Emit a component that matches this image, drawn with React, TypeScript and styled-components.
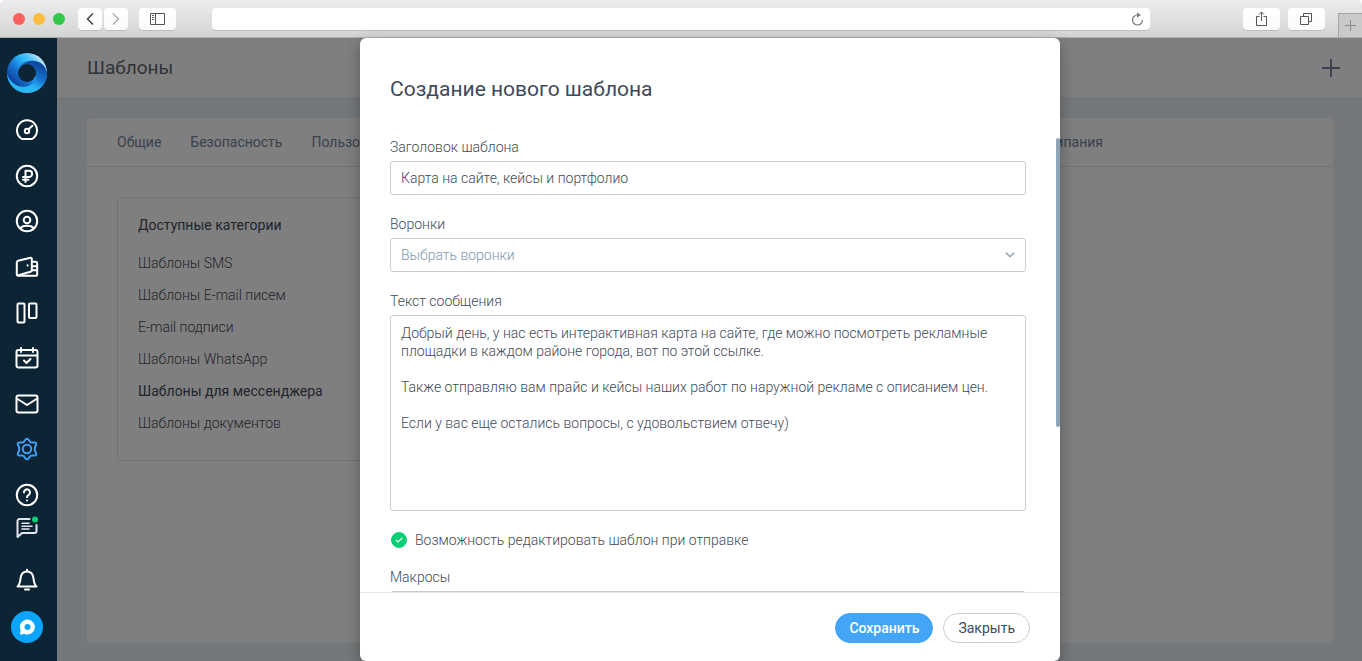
import React from "react";
import styled, { createGlobalStyle, css } from "styled-components";

const Global = createGlobalStyle`
  *, *::before, *::after { box-sizing: border-box; }
  body { margin: 0; background: #fff; }
  body, button, input, select, textarea {
    font-family: Roboto, "Noto Sans", "Liberation Sans", sans-serif;
    font-size: 14px;
    line-height: 18px;
    color: #3f4a59;
  }
  button { cursor: pointer; padding: 0; border: 0; background: none; }
  a { text-decoration: none; color: inherit; }
  h1, h2, ul { margin: 0; padding: 0; }
  ul { list-style: none; }
  svg { display: block; flex: none; }
`;

/* ---------- browser window ---------- */

const Page = styled.div`
  height: 100vh;
  display: flex;
  flex-direction: column;
`;

const Chrome = styled.div`
  flex: none;
  height: 38px;
  display: flex;
  align-items: center;
  padding-left: 13px;
  background: linear-gradient(#ececec, #d4d4d4);
  border-bottom: 1px solid #adadad;
  border-radius: 5px 5px 0 0;
`;

const Lights = styled.div`
  display: flex;
  gap: 8px;
  margin-right: 13px;
`;

const Light = styled.span<{ $color: string }>`
  width: 12px;
  height: 12px;
  border-radius: 50%;
  background: ${(p) => p.$color};
`;

const ChromeButton = styled.button<{ $wide?: boolean }>`
  flex: none;
  width: ${(p) => (p.$wide ? 37 : 24)}px;
  height: 22px;
  display: flex;
  align-items: center;
  justify-content: center;
  background: linear-gradient(#fff, #fbfbfb);
  border-radius: 4px;
  box-shadow: 0 1px 0 #bdbdbd;
`;

const ButtonPair = styled.div<{ $gap: number }>`
  display: flex;
  gap: ${(p) => p.$gap}px;
`;

const SidebarToggle = styled.div`
  margin: 0 36px 0 11px;
`;

const AddressBar = styled.div`
  flex: 1;
  height: 22px;
  margin-right: 93px;
  display: flex;
  align-items: center;
  background: #fff;
  border-radius: 4px;
  box-shadow: 0 1px 0 #bdbdbd;
`;

const AddressInput = styled.input`
  flex: 1;
  min-width: 0;
  border: 0;
  outline: 0;
  background: none;
  padding: 0 8px;
`;

const ReloadButton = styled.button`
  margin-right: 6px;
`;

const NewTab = styled.button`
  flex: none;
  align-self: flex-end;
  width: 24px;
  height: 24px;
  margin-left: 13px;
  display: flex;
  align-items: center;
  justify-content: center;
  background: #c9c9c9;
  border: 1px solid #a5a5a5;
  border-width: 1px 0 0 1px;
`;

/* ---------- application ---------- */

const Shell = styled.div`
  flex: 1;
  min-height: 0;
  display: flex;
`;

const Sidebar = styled.aside`
  flex: none;
  width: 57px;
  padding: 15px 3px 18px 0;
  display: flex;
  flex-direction: column;
  align-items: center;
  background: #0d2435;
`;

const Nav = styled.nav`
  flex: 0 0 389px;
  margin-top: 25px;
  display: flex;
  flex-direction: column;
  justify-content: space-between;
`;

const NavLink = styled.a<{ $active?: boolean }>`
  color: ${(p) => (p.$active ? "#3ea2f8" : "#fff")};
`;

const Extras = styled.div`
  flex: 1;
  margin-top: 8px;
  display: flex;
  flex-direction: column;
  align-items: center;
  color: #fff;
`;

const BellButton = styled.button`
  margin: auto 0 19px;
  color: #fff;
`;

const Work = styled.div`
  flex: 1;
  min-width: 0;
  position: relative;
  display: flex;
  flex-direction: column;
  background: #e8f0f5;
`;

const TopBar = styled.header`
  flex: none;
  height: 59px;
  display: flex;
  align-items: center;
  justify-content: space-between;
  padding: 0 22px 0 30px;
  background: #fff;
`;

const PageTitle = styled.h1`
  font-size: 19px;
  line-height: 24px;
  font-weight: 400;
  color: #5c6874;
`;

const Card = styled.section`
  flex: 1;
  min-height: 0;
  margin: 21px 29px 18px 30px;
  background: #fff;
  border-radius: 5px;
`;

const Tabs = styled.nav`
  display: flex;
  gap: 29px;
  height: 49px;
  padding: 0 230px 0 30px;
  align-items: center;
  border-bottom: 1px solid #dfe5ed;
`;

const Tab = styled.a<{ $last?: boolean }>`
  color: #74859a;
  ${(p) => p.$last && css`margin-left: auto;`}
`;

const Categories = styled.div`
  width: 300px;
  margin: 30px;
  padding: 18px 20px 28px;
  border: 1px solid #e2e8ee;
  border-radius: 4px;
`;

const CategoriesTitle = styled.h2`
  font-size: 14px;
  line-height: 18px;
  font-weight: 400;
  margin-bottom: 20px;
`;

const CategoryList = styled.ul`
  display: flex;
  flex-direction: column;
  gap: 14px;
`;

const CategoryLink = styled.a<{ $active?: boolean }>`
  font-weight: ${(p) => (p.$active ? 400 : 300)};
`;

/* ---------- dialog ---------- */

const Overlay = styled.div`
  position: absolute;
  inset: 0;
  padding-left: 1px;
  display: flex;
  justify-content: center;
  background: rgba(0, 0, 0, 0.5);
`;

const Dialog = styled.div`
  width: 700px;
  max-width: 100%;
  display: flex;
  flex-direction: column;
  background: #fff;
  border-radius: 6px;
  box-shadow: 0 5px 15px rgba(0, 0, 0, 0.3);
`;

const DialogTitle = styled.h2`
  padding: 37px 30px 35px;
  font-size: 21px;
  line-height: 28px;
  font-weight: 400;
`;

const ScrollArea = styled.div`
  flex: 1;
  min-height: 0;
  display: flex;
  position: relative;
`;

const Fields = styled.div`
  flex: 1;
  min-width: 0;
  overflow-y: auto;
  scrollbar-width: none;
  padding: 0 34px 0 30px;
`;

const Thumb = styled.span`
  position: absolute;
  top: 0;
  right: 0;
  width: 4px;
  height: 289px;
  border-radius: 2px;
  background: #8fa5b8;
`;

const Field = styled.div`
  display: flex;
  flex-direction: column;
  gap: 5px;
  margin-bottom: 20px;
`;

const Label = styled.label`
  font-weight: 300;
`;

const control = css`
  width: 100%;
  margin: 0;
  padding: 0 10px;
  font-weight: 300;
  background: #fff;
  border: 1px solid #c6cdd6;
  border-radius: 3px;
  outline: 0;
`;

const TextInput = styled.input`
  ${control}
  height: 34px;
`;

const SelectWrap = styled.div`
  display: grid;
  align-items: center;
  > * { grid-area: 1 / 1; }
  > svg { justify-self: end; margin-right: 11px; pointer-events: none; }
`;

const Select = styled.select`
  ${control}
  height: 34px;
  appearance: none;
  color: #7f96ae;
`;

const Message = styled.textarea`
  ${control}
  display: block;
  height: 196px;
  padding: 8px 10px;
  resize: none;
`;

const CheckRow = styled.label`
  display: flex;
  align-items: center;
  gap: 8px;
  margin: 19px 0;
  font-weight: 300;
`;

const CheckMark = styled.span`
  display: grid;
  place-items: center;
  margin-left: 1px;
  > * { grid-area: 1 / 1; pointer-events: none; }
`;

const Check = styled.input`
  appearance: none;
  width: 16px;
  height: 16px;
  margin: 0;
  border: 1px solid #c6cdd6;
  border-radius: 50%;
  && { pointer-events: auto; }
  &:checked { background: #0bcf74; border-color: #0bcf74; }
`;

const Footer = styled.footer`
  flex: none;
  display: flex;
  justify-content: flex-end;
  gap: 10px;
  padding: 20px 30px 18px;
  border-top: 1px solid #e1e6ed;
`;

const Pill = styled.button<{ $primary?: boolean }>`
  height: 30px;
  padding: 0 14px;
  border: 1px solid #c6cdd6;
  border-radius: 15px;
  ${(p) =>
    p.$primary &&
    css`
      padding: 0 13px;
      font-weight: 500;
      color: #fff;
      background: #42a5f7;
      border-color: #42a5f7;
    `}
`;

/* ---------- icons ---------- */

const Icon = ({ children }: { children: React.ReactNode }) => (
  <svg width="24" height="24" viewBox="0 0 24 24" fill="none" stroke="currentColor" strokeWidth="2" strokeLinecap="round" strokeLinejoin="round" aria-hidden="true">
    {children}
  </svg>
);

const Logo = () => (
  <svg width="40" height="40" viewBox="0 0 40 40" aria-hidden="true">
    <defs>
      <linearGradient id="upper" gradientUnits="userSpaceOnUse" x1="9" y1="31" x2="35" y2="6">
        <stop offset="0" stopColor="#0d47a1" />
        <stop offset="0.3" stopColor="#1976d2" />
        <stop offset="0.6" stopColor="#29b6f6" />
        <stop offset="0.8" stopColor="#5fc8f8" />
        <stop offset="1" stopColor="#cdeafc" />
      </linearGradient>
      <linearGradient id="lower" gradientUnits="userSpaceOnUse" x1="30" y1="11" x2="17" y2="38">
        <stop offset="0" stopColor="#0d47a1" />
        <stop offset="0.45" stopColor="#1976d2" />
        <stop offset="0.75" stopColor="#29b6f6" />
        <stop offset="1" stopColor="#29b6f6" />
      </linearGradient>
    </defs>
    <circle cx="20" cy="20" r="20" fill="url(#upper)" />
    <path d="M13 13C22 4 38 7 40 20A20 20 0 0 1 0 20C2 31 15 38 25 31C28 29 29 27 29 24L20 20Z" fill="url(#lower)" />
    <circle cx="20" cy="20" r="9" fill="#0d2435" />
  </svg>
);

const navItems = [
  { name: "Показатели", icon: <><path d="M7 21h10a10 10 0 1 0-10 0Z" /><circle cx="12" cy="13" r="2.200" /><path d="m13.700 11.300 3.600-3.600" /></> },
  { name: "Финансы", icon: <><circle cx="12" cy="12" r="10.200" /><path d="M10.500 18V6.800h3.500a3 3 0 0 1 0 6.200H8M8 15.800h5.500" /></> },
  { name: "Клиенты", icon: <><circle cx="12" cy="12" r="10.200" /><circle cx="12" cy="11" r="3.300" /><path d="M5 19c3.500-3 10.500-3 14 0" /></> },
  { name: "Касса", icon: <><path d="M1.800 7.500c0-1 .5-1.500 1.300-1.700L15.500 2.800c.8-.2 1.300.2 1.300 1v11.400c0 .8-.4 1.300-1.300 1.500L2.500 20.500c-.5 0-.7-.3-.7-.8Z" /><path d="M3 20.800h17.500c1 0 1.700-.6 1.700-1.600V8.500c0-1-.6-1.700-1.700-1.700H17M17 11.300h5M17 15.200h5M12.600 10.200v.4" /></> },
  { name: "Сделки", icon: <><rect x="2.500" y="2.500" width="7" height="19" rx="1" /><rect x="14" y="2.500" width="7.500" height="14.500" rx="1" /></> },
  { name: "Задачи", icon: <><rect x="1.500" y="4" width="21" height="17.500" rx="2" /><path d="M2 9.500h20M6 2v4M18 2v4M9 14.500l2.500 2.500 4-4" /></> },
  { name: "Почта", icon: <><rect x="1.500" y="3.500" width="21" height="17" rx="2" /><path d="m2.500 7 9.500 6 9.500-6" /></> },
  { name: "Настройки", active: true, icon: <><path d="M12 1.800c1.900 0 2.200 3 4 3.600 1.800.7 4.100-.9 5.100.6.900 1.800-1.400 3.200-1.400 6s2.300 4.200 1.400 6c-1 1.500-3.300-.1-5.100.6-1.800.6-2.100 3.600-4 3.600s-2.200-3-4-3.600c-1.800-.7-4.100.9-5.100-.6C2 16.200 4.300 14.800 4.300 12S2 7.800 2.900 6C3.900 4.500 6.200 6.100 8 5.400c1.800-.6 2.100-3.600 4-3.600Z" /><circle cx="12" cy="12" r="4.200" /></> },
  { name: "Помощь", icon: <><circle cx="12" cy="12" r="10.200" /><path d="M9 9.500a3 3 0 1 1 4.800 2.300c-1.200.8-1.800 1.300-1.800 2.400M12 17.400v.1" /></> },
];

const ChatIcon = () => (
  <Icon>
    <g stroke="#e3e6ec">
      <path d="M14.500 4H4.500a2 2 0 0 0-2 2v16l4.500-4h12.500a2 2 0 0 0 2-2V10" />
      <path d="M7 8.300h7M7 11.200h10M7 14.100h7" strokeWidth="1.500" />
    </g>
    <circle cx="20" cy="4.500" r="3" fill="#0bcf74" stroke="none" />
  </Icon>
);

const tabs = ["Общие", "Безопасность", "Пользователи", "Компания"];

const categories = [
  "Шаблоны SMS",
  "Шаблоны E-mail писем",
  "E-mail подписи",
  "Шаблоны WhatsApp",
  "Шаблоны для мессенджера",
  "Шаблоны документов",
];

const messageText = `Добрый день, у нас есть интерактивная карта на сайте, где можно посмотреть рекламные площадки в каждом районе города, вот по этой ссылке.

Также отправляю вам прайс и кейсы наших работ по наружной рекламе с описанием цен.

Если у вас еще остались вопросы, с удовольствием отвечу)`;

function BrowserBar() {
  return (
    <Chrome>
      <Lights>
        <Light $color="#fc605b" />
        <Light $color="#fdbc40" />
        <Light $color="#34c84a" />
      </Lights>
      <ButtonPair $gap={2}>
        <ChromeButton aria-label="Назад">
          <svg width="8" height="12" viewBox="0 0 8 12" fill="none" stroke="#444" strokeWidth="1.500"><path d="M7 .5 1.500 6 7 11.500" /></svg>
        </ChromeButton>
        <ChromeButton aria-label="Вперёд">
          <svg width="8" height="12" viewBox="0 0 8 12" fill="none" stroke="#b0b0b0" strokeWidth="1.500"><path d="M1 .5 6.500 6 1 11.500" /></svg>
        </ChromeButton>
      </ButtonPair>
      <SidebarToggle>
        <ChromeButton $wide aria-label="Боковая панель">
          <svg width="15" height="12" viewBox="0 0 15 12" fill="none" stroke="#555"><path d="M.5.500h14v11H.5zM5.500.500v11M2 2.500h2M2 4.500h2M2 6.500h2" /></svg>
        </ChromeButton>
      </SidebarToggle>
      <AddressBar>
        <AddressInput aria-label="Адрес" />
        <ReloadButton aria-label="Обновить">
          <svg width="13" height="14" viewBox="0 0 13 14" fill="none" stroke="#777" strokeWidth="1.200"><path d="M6.500 3A5 5 0 1 0 11.500 8" /><path d="M6 .5v5l4-2.500Z" fill="#777" stroke="none" /></svg>
        </ReloadButton>
      </AddressBar>
      <ButtonPair $gap={8}>
        <ChromeButton $wide aria-label="Поделиться">
          <svg width="11" height="15" viewBox="0 0 11 15" fill="none" stroke="#555"><path d="M3.500 5.500h-3v9h10v-9h-3M5.500 10V1M3 3.500 5.500 1 8 3.500" /></svg>
        </ChromeButton>
        <ChromeButton $wide aria-label="Вкладки">
          <svg width="13" height="12" viewBox="0 0 13 12" fill="none" stroke="#555"><path d="M.5 3.500h8v8h-8zM3.500 3.500v-3h8v8h-3" /></svg>
        </ChromeButton>
      </ButtonPair>
      <NewTab aria-label="Новая вкладка">
        <svg width="11" height="11" viewBox="0 0 11 11" stroke="#8a8a8a"><path d="M5.500 0v11M0 5.500h11" /></svg>
      </NewTab>
    </Chrome>
  );
}

function SideMenu() {
  return (
    <Sidebar>
      <Logo />
      <Nav>
        {navItems.map((item) => (
          <NavLink key={item.name} href="#" aria-label={item.name} $active={item.active}>
            <Icon>{item.icon}</Icon>
          </NavLink>
        ))}
      </Nav>
      <Extras>
        <NavLink href="#" aria-label="Чат"><ChatIcon /></NavLink>
        <BellButton aria-label="Уведомления">
          <Icon><path d="M2.500 18.500h19c-2-1.500-2.500-3.500-3-8C18 6 15.500 3.500 12 3.500S6 6 5.500 10.500c-.5 4.500-1 6.500-3 8ZM12 1.800v1M10 21.500h4" /></Icon>
        </BellButton>
        <svg width="32" height="32" viewBox="0 0 32 32" aria-hidden="true">
          <circle cx="16" cy="16" r="16" fill="#0ba5fb" />
          <path d="M16.500 8.500a7.500 7.500 0 1 1-3.500 14.200c-1.300.8-2.700.8-4 .8 0-2 .5-3 .8-4A7.500 7.500 0 0 1 16.500 8.500Z" fill="#fff" />
          <circle cx="16.500" cy="16" r="3" fill="#0ba5fb" />
        </svg>
      </Extras>
    </Sidebar>
  );
}

function TemplateDialog() {
  return (
    <Overlay>
      <Dialog role="dialog" aria-labelledby="dialog-title">
        <DialogTitle id="dialog-title">Создание нового шаблона</DialogTitle>
        <ScrollArea>
          <Fields>
            <Field>
              <Label htmlFor="title">Заголовок шаблона</Label>
              <TextInput id="title" defaultValue="Карта на сайте, кейсы и портфолио" />
            </Field>
            <Field>
              <Label htmlFor="funnels">Воронки</Label>
              <SelectWrap>
                <Select id="funnels"><option>Выбрать воронки</option></Select>
                <svg width="10" height="6" viewBox="0 0 10 6" fill="none" stroke="#8fa5b8" strokeWidth="1.500"><path d="m1 .8 4 4 4-4" /></svg>
              </SelectWrap>
            </Field>
            <Field>
              <Label htmlFor="message">Текст сообщения</Label>
              <Message id="message" defaultValue={messageText} />
            </Field>
            <CheckRow>
              <CheckMark>
                <Check type="checkbox" defaultChecked />
                <svg width="8" height="6" viewBox="0 0 8 6" fill="none" stroke="#fff" strokeWidth="1.200"><path d="m.8 3 2.200 2L7.200 1" /></svg>
              </CheckMark>
              Возможность редактировать шаблон при отправке
            </CheckRow>
            <Field>
              <Label htmlFor="macros">Макросы</Label>
              <TextInput id="macros" />
            </Field>
          </Fields>
          <Thumb />
        </ScrollArea>
        <Footer>
          <Pill $primary>Сохранить</Pill>
          <Pill>Закрыть</Pill>
        </Footer>
      </Dialog>
    </Overlay>
  );
}

export default function App() {
  return (
    <Page>
      <Global />
      <BrowserBar />
      <Shell>
        <SideMenu />
        <Work>
          <TopBar>
            <PageTitle>Шаблоны</PageTitle>
            <button aria-label="Добавить">
              <svg width="18" height="18" viewBox="0 0 18 18" stroke="#74859a" strokeWidth="2"><path d="M9 0v18M0 9h18" /></svg>
            </button>
          </TopBar>
          <Card>
            <Tabs>
              {tabs.map((tab, i) => (
                <Tab key={tab} href="#" $last={i === tabs.length - 1}>{tab}</Tab>
              ))}
            </Tabs>
            <Categories>
              <CategoriesTitle>Доступные категории</CategoriesTitle>
              <CategoryList>
                {categories.map((name, i) => (
                  <li key={name}><CategoryLink href="#" $active={i === 4}>{name}</CategoryLink></li>
                ))}
              </CategoryList>
            </Categories>
          </Card>
          <TemplateDialog />
        </Work>
      </Shell>
    </Page>
  );
}
